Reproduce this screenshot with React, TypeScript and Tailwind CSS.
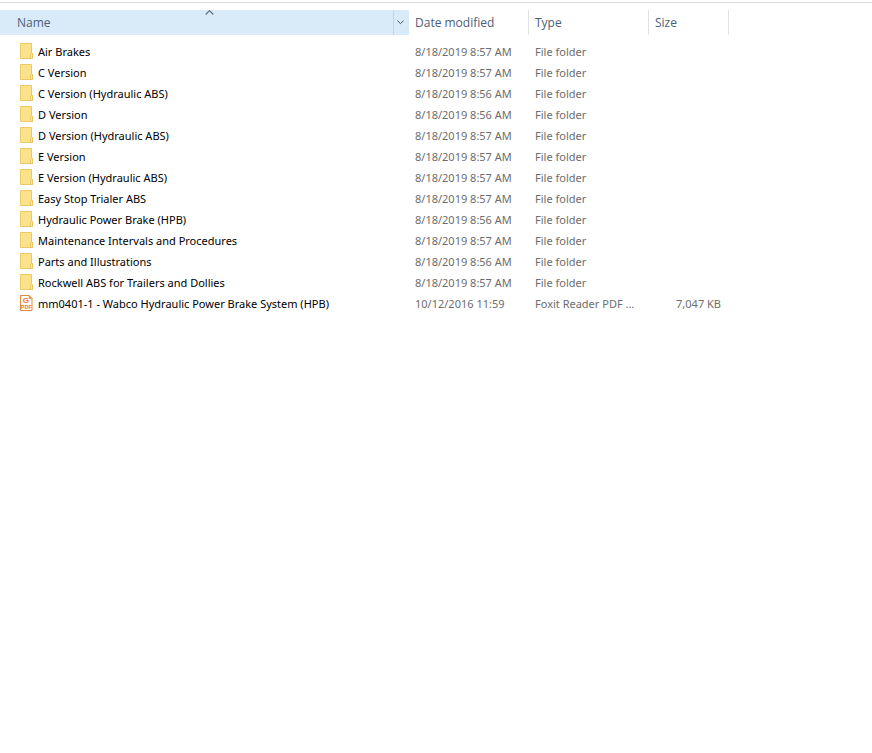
import { useState } from 'react';

type FileItem = {
  name: string;
  modified: string;
  type: string;
  size?: string;
  kind: 'folder' | 'pdf';
};

const folder = (name: string, modified: string): FileItem => ({
  name,
  modified,
  type: 'File folder',
  kind: 'folder',
});

const items: FileItem[] = [
  folder('Air Brakes', '8/18/2019 8:57 AM'),
  folder('C Version', '8/18/2019 8:57 AM'),
  folder('C Version (Hydraulic ABS)', '8/18/2019 8:56 AM'),
  folder('D Version', '8/18/2019 8:56 AM'),
  folder('D Version (Hydraulic ABS)', '8/18/2019 8:57 AM'),
  folder('E Version', '8/18/2019 8:57 AM'),
  folder('E Version (Hydraulic ABS)', '8/18/2019 8:57 AM'),
  folder('Easy Stop Trialer ABS', '8/18/2019 8:57 AM'),
  folder('Hydraulic Power Brake (HPB)', '8/18/2019 8:56 AM'),
  folder('Maintenance Intervals and Procedures', '8/18/2019 8:57 AM'),
  folder('Parts and Illustrations', '8/18/2019 8:56 AM'),
  folder('Rockwell ABS for Trailers and Dollies', '8/18/2019 8:57 AM'),
  {
    name: 'mm0401-1 - Wabco Hydraulic Power Brake System (HPB)',
    modified: '10/12/2016 11:59',
    type: 'Foxit Reader PDF ...',
    size: '7,047 KB',
    kind: 'pdf',
  },
];

const FolderIcon = () => (
  <svg className="mt-0.5 h-4 w-[13px] shrink-0" viewBox="0 0 13 16" aria-hidden="true">
    <path d="M.5 .5h11v9l1 1.2v4.8H.5z" fill="#fde28c" stroke="#ecc964" />
    <path d="M11.5 10l-1 1.4v4h2v-4.7z" fill="#fbe9ae" stroke="#e3bd55" strokeWidth=".7" />
  </svg>
);

const PdfIcon = () => (
  <svg
    className="mt-0.5 h-4 w-[13px] shrink-0 font-['Liberation_Sans',sans-serif]"
    viewBox="0 0 13 16"
    aria-hidden="true"
  >
    <path d="M.5 .5h8.5l3 3v12H.5z" fill="#fff" stroke="#e58a3c" />
    <path d="M9 .5v3h3z" fill="#e58a3c" stroke="#e58a3c" strokeWidth=".5" />
    <text x="5.8" y="8.2" textAnchor="middle" fontSize="8" fontWeight="700" fill="#e8792a">
      G
    </text>
    <text x="6.3" y="13.8" textAnchor="middle" fontSize="5.5" fontWeight="700" fill="#e8792a">
      PDF
    </text>
  </svg>
);

export default function App() {
  const [ascending, setAscending] = useState(true);
  const rows = ascending ? items : [...items].reverse();

  return (
    <main className="min-h-screen bg-white pt-0.5 font-['Open_Sans','Noto_Sans',sans-serif] text-xs text-[#6d6d6d]">
      <div className="border-t border-[#d9d9d9] pt-[7px]">
        <table className="w-full table-fixed border-separate border-spacing-0">
          <colgroup>
            <col className="w-[409px]" />
            <col className="w-[120px]" />
            <col className="w-[120px]" />
            <col className="w-20" />
            <col />
          </colgroup>
          <thead>
            <tr className="h-[25px] text-left text-[#4c607a]">
              <th className="bg-[#d9ebf9] p-0 font-normal" aria-sort={ascending ? 'ascending' : 'descending'}>
                <div className="flex h-[25px]">
                  <button
                    className="relative flex flex-1 items-center pl-[17px] text-left"
                    onClick={() => setAscending(!ascending)}
                  >
                    Name
                    <svg
                      className={`absolute top-0 left-[205px] h-[5px] w-[9px] ${ascending ? '' : 'rotate-180'}`}
                      viewBox="0 0 9 5"
                      fill="none"
                      stroke="#5f6b78"
                      strokeWidth="1.2"
                      aria-hidden="true"
                    >
                      <path d="M.7 4.5l3.8-3.8 3.8 3.8" />
                    </svg>
                  </button>
                  <button
                    className="flex w-4 items-center border-l border-[#bcd8ec] pl-[3px]"
                    aria-label="Filter by name"
                  >
                    <svg className="h-[5px] w-[7px]" viewBox="0 0 7 5" fill="none" stroke="#44566c" aria-hidden="true">
                      <path d="M.4 .6l3.1 3.1 3.1-3.1" />
                    </svg>
                  </button>
                </div>
              </th>
              <th className="border-r border-[#e2e2e2] py-0 pr-0 pl-1.5 font-normal">Date modified</th>
              <th className="border-r border-[#e2e2e2] py-0 pr-0 pl-1.5 font-normal">Type</th>
              <th className="border-r border-[#e2e2e2] py-0 pr-0 pl-1.5 font-normal">Size</th>
              <td />
            </tr>
          </thead>
          <tbody className="font-['Noto_Sans','Open_Sans',sans-serif] text-[11px] leading-[21px] before:block before:h-1.5">
            {rows.map((item) => (
              <tr key={item.name} className="h-[21px] whitespace-nowrap hover:bg-[#e5f3ff]">
                <td className="py-0 pr-0 pl-5 text-black">
                  <div className="flex items-start gap-[5px]">
                    {item.kind === 'folder' ? <FolderIcon /> : <PdfIcon />}
                    <span className="truncate">{item.name}</span>
                  </div>
                </td>
                <td className="py-0 pr-0 pl-1.5">{item.modified}</td>
                <td className="py-0 pr-0 pl-1.5">{item.type}</td>
                <td className="py-0 pr-2 pl-0 text-right">{item.size}</td>
                <td />
              </tr>
            ))}
          </tbody>
        </table>
      </div>
    </main>
  );
}
